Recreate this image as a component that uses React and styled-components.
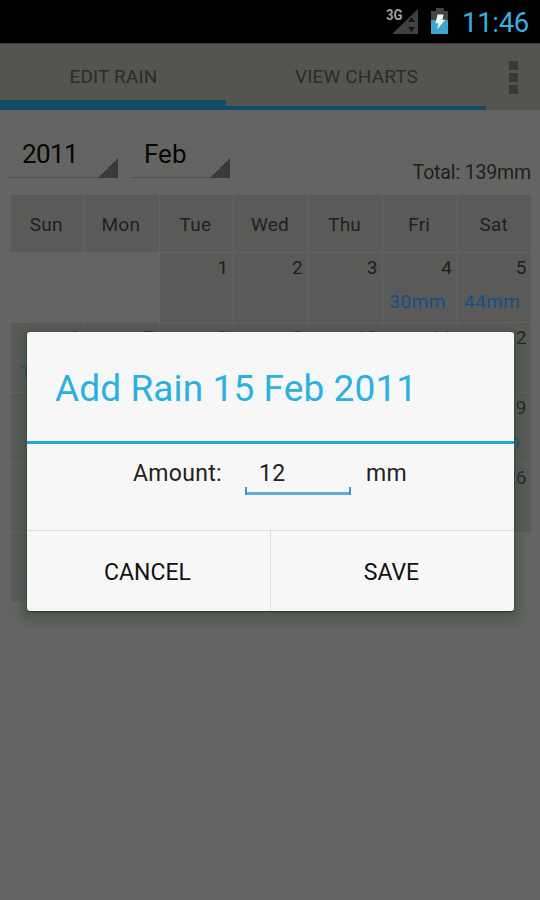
import React from 'react';
import styled, { createGlobalStyle } from 'styled-components';

const GlobalStyle = createGlobalStyle`
  * {
    box-sizing: border-box;
  }

  body {
    margin: 0;
    background: #646562;
    font-family: Roboto, sans-serif;
  }
`;

const Screen = styled.div`
  position: relative;
  width: 540px;
  height: 900px;
  overflow: hidden;
  background: #646562;
`;

const StatusBar = styled.header`
  height: 43px;
  padding-right: 11px;
  background: #000;
  display: flex;
  align-items: center;
  justify-content: flex-end;
`;

const SignalIcon = styled.svg`
  width: 34px;
  height: 43px;
  margin-right: 12px;
`;

const BatteryIcon = styled.svg`
  width: 18px;
  height: 43px;
  margin-right: 12px;
`;

const Clock = styled.span`
  width: 68px;
  font-size: 27.5px;
  line-height: 43px;
  letter-spacing: -0.3px;
  text-align: right;
  color: #35b0e0;
  padding-top: 2px;
`;

const ActionBar = styled.nav`
  height: 67px;
  background: #545551;
  border-top: 1px solid #3c3d3a;
  display: flex;
`;

const Tab = styled.div`
  width: ${({ $width }) => $width}px;
  height: 66px;
  padding-left: 1px;
  border-bottom: ${({ $active }) => ($active ? 10 : 4)}px solid #0e4e68;
  font-size: 19px;
  line-height: 66px;
  letter-spacing: 0.15px;
  text-align: center;
  color: #2a2b29;
`;

const OverflowButton = styled.div`
  flex: 1;
  display: flex;
  flex-direction: column;
  align-items: center;
  justify-content: center;
  gap: 3px;
`;

const OverflowDot = styled.span`
  width: 9px;
  height: 9px;
  background: #383937;
`;

const Filters = styled.div`
  height: 85px;
  padding: 27px 9px 0;
  display: flex;
  align-items: flex-start;
`;

const Spinner = styled.div`
  width: ${({ $width }) => $width}px;
  height: 41px;
  margin-right: 13px;
  padding-left: 13px;
  border-bottom: 1px solid #515250;
  display: flex;
  align-items: flex-end;
  justify-content: space-between;
  font-size: 26px;
  line-height: 45px;
  letter-spacing: ${({ $tracking }) => $tracking || 0}px;
  color: #060606;
`;

const SpinnerArrow = styled.svg`
  width: 20px;
  height: 20px;
  margin-bottom: -1px;
`;

const Total = styled.div`
  flex: 1;
  padding-top: 24px;
  font-size: 19.5px;
  line-height: 24px;
  letter-spacing: -0.15px;
  text-align: right;
  white-space: nowrap;
  color: #1d1e1d;
`;

const Calendar = styled.section`
  width: 521px;
  margin-left: 10.5px;
  display: grid;
  grid-template-columns: repeat(7, 1fr);
  grid-template-rows: 57px;
  grid-auto-rows: 69px;
  gap: 1px;
`;

const Weekday = styled.div`
  padding-right: 2px;
  background: #5a5b58;
  font-size: 19px;
  line-height: 59px;
  letter-spacing: 0.2px;
  text-align: center;
  color: #1f201f;
`;

const Day = styled.div`
  padding: 3px 5px 0 0;
  background: ${({ $empty }) => ($empty ? 'transparent' : '#5a5b58')};
  display: flex;
  flex-direction: column;
  font-size: 19px;
  line-height: 24px;
  text-align: right;
  color: #1d1e1d;
`;

const Rainfall = styled.span`
  margin-top: 10px;
  padding-left: ${({ $indent }) => $indent || 0}px;
  letter-spacing: 0.4px;
  text-align: center;
  color: #184c86;
`;

const Dialog = styled.div`
  position: absolute;
  left: 27px;
  top: 332px;
  width: 487px;
  height: 279px;
  border-radius: 3px;
  background: #f7f7f7;
  box-shadow: 0 1px 2px rgba(20, 30, 24, 0.7), 0 4px 7px 7px rgba(66, 79, 70, 0.5);
  display: flex;
  flex-direction: column;
`;

const DialogTitle = styled.h1`
  height: 112px;
  margin: 0;
  padding: 0 28px;
  border-bottom: 3px solid #1ca6da;
  font-size: 37px;
  font-weight: 400;
  line-height: 113px;
  letter-spacing: 0.1px;
  white-space: nowrap;
  color: #29b1e2;
`;

const AmountRow = styled.div`
  height: 86px;
  padding: 12px 0 0 106px;
  display: flex;
  align-items: flex-start;
  font-size: 23px;
  line-height: 35px;
  letter-spacing: 0.3px;
  color: #222;
`;

const AmountLabel = styled.label`
  width: 112px;
`;

const AmountField = styled.div`
  position: relative;
  width: 106px;
  height: 39px;
  margin-right: 15px;
  padding-left: 14px;
  border-bottom: 3px solid #65a9d8;

  &::after {
    content: '';
    position: absolute;
    left: 0;
    right: 0;
    bottom: -3px;
    height: 8px;
    border: solid #3c95cf;
    border-width: 0 2px;
  }
`;

const DialogActions = styled.div`
  flex: 1;
  border-top: 1px solid #dedede;
  display: grid;
  grid-template-columns: 244px 1fr;
`;

const DialogButton = styled.button`
  padding: 2px 2px 0 0;
  border: 0;
  border-right: ${({ $divided }) => ($divided ? '1px solid #dedede' : '0')};
  background: none;
  font-family: inherit;
  font-size: 23px;
  color: #111;
`;

const weekdays = ['Sun', 'Mon', 'Tue', 'Wed', 'Thu', 'Fri', 'Sat'];

const rain = { 4: 30, 5: 44, 6: 14, 19: 43, 27: 8 };

// February 2011 starts on a Tuesday
const days = [null, null, ...Array.from({ length: 28 }, (_, i) => i + 1)];

const App = () => {
  return (
    <Screen>
      <GlobalStyle />
      <StatusBar>
        <SignalIcon viewBox="0 0 34 43">
          <path d="M33 9V34H7Z" fill="#414141" />
          <path d="M26.500 17l3.500 5h-7zM26.500 32l3.500-5h-7z" fill="#151515" />
          <text x="1" y="20" fontSize="15" fontWeight="700" fill="#a0a0a0" stroke="#000" strokeWidth="2" paintOrder="stroke" textLength="16.500" lengthAdjust="spacingAndGlyphs">3G</text>
        </SignalIcon>
        <BatteryIcon viewBox="0 0 18 43">
          <path d="M5 8h8v3h4v10H0V11h5z" fill="#444" />
          <path d="M0 20h17v14H0z" fill="#3da4cc" />
          <path d="M6.500 14.500h6l-1 5.500 3-.5-8.500 10 1.500-6.500-3 .5z" fill="#f2f6f7" />
        </BatteryIcon>
        <Clock>11:46</Clock>
      </StatusBar>

      <ActionBar>
        <Tab $width={226} $active>EDIT RAIN</Tab>
        <Tab $width={260}>VIEW CHARTS</Tab>
        <OverflowButton>
          <OverflowDot />
          <OverflowDot />
          <OverflowDot />
        </OverflowButton>
      </ActionBar>

      <Filters>
        <Spinner $width={109} $tracking={-0.6}>
          2011
          <SpinnerArrow viewBox="0 0 20 20"><path d="M20 0V20H0Z" fill="#3a3b39" /></SpinnerArrow>
        </Spinner>
        <Spinner $width={99}>
          Feb
          <SpinnerArrow viewBox="0 0 20 20"><path d="M20 0V20H0Z" fill="#3a3b39" /></SpinnerArrow>
        </Spinner>
        <Total>Total: 139mm</Total>
      </Filters>

      <Calendar>
        {weekdays.map((name) => (
          <Weekday key={name}>{name}</Weekday>
        ))}
        {days.map((day, i) => (
          <Day key={i} $empty={!day}>
            {day}
            {rain[day] && <Rainfall $indent={i % 7 === 0 ? 6 : 0}>{rain[day]}mm</Rainfall>}
          </Day>
        ))}
      </Calendar>

      <Dialog role="dialog">
        <DialogTitle>Add Rain 15 Feb 2011</DialogTitle>
        <AmountRow>
          <AmountLabel>Amount:</AmountLabel>
          <AmountField>12</AmountField>
          <span>mm</span>
        </AmountRow>
        <DialogActions>
          <DialogButton $divided>CANCEL</DialogButton>
          <DialogButton>SAVE</DialogButton>
        </DialogActions>
      </Dialog>
    </Screen>
  );
};

export default App;
